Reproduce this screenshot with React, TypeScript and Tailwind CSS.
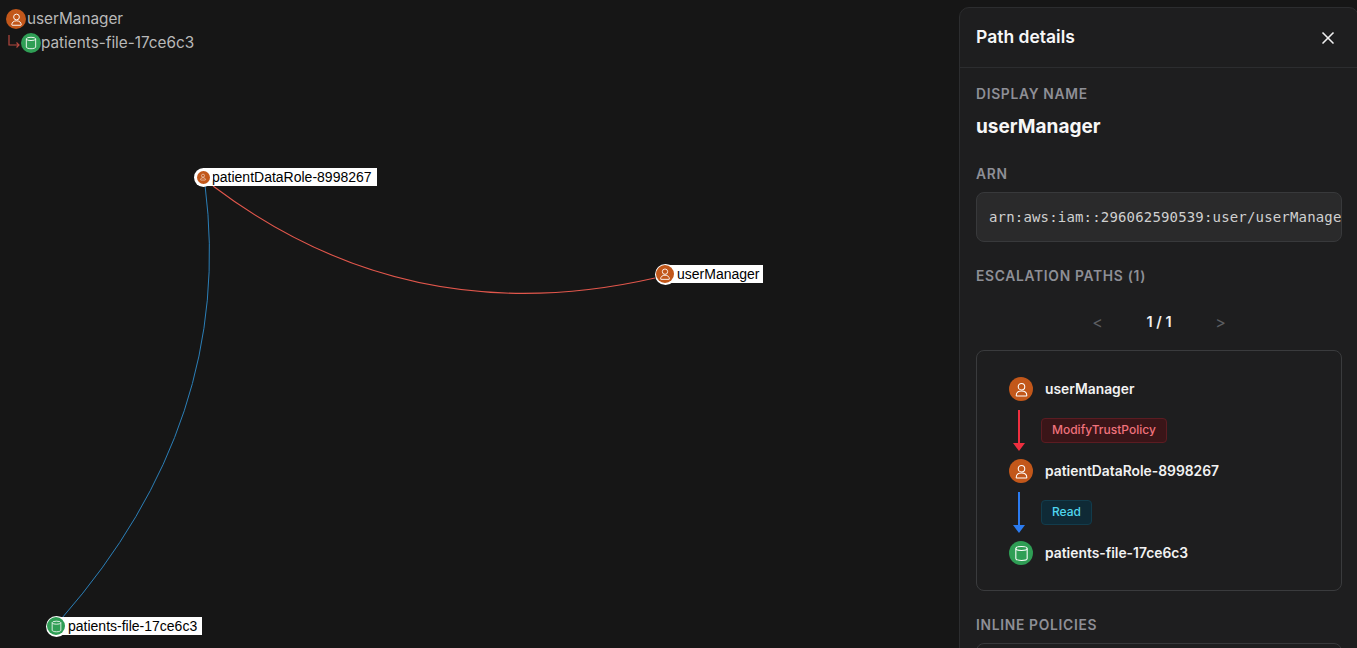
import React from 'react';
import { X } from 'lucide-react';

const inter = 'font-["Inter","Liberation_Sans",sans-serif]';

const UserGlyph: React.FC<{ size: number }> = ({ size }) => (
  <svg width={size} height={size} viewBox="0 0 24 24" fill="none" stroke="white" strokeWidth={1.5} strokeLinejoin="round">
    <circle cx="12" cy="8" r="4.6" />
    <path d="M4.500 20.500c0-4 3-6.400 7.500-6.400s7.500 2.400 7.500 6.400c0 .4-.3.700-.7.700H5.200c-.4 0-.7-.3-.7-.7z" />
  </svg>
);

const BucketGlyph: React.FC<{ size: number }> = ({ size }) => (
  <svg width={size} height={size} viewBox="0 0 24 24" fill="none" stroke="white" strokeWidth={1.5}>
    <ellipse cx="12" cy="5" rx="8" ry="2.800" />
    <path d="M4 5v14c0 1.500 3.600 2.800 8 2.800s8-1.300 8-2.800V5" />
  </svg>
);

const Round: React.FC<{ kind: 'user' | 'bucket'; size?: number; glyph?: number }> = ({ kind, size = 24, glyph = 17 }) => (
  <div
    className={`flex shrink-0 items-center justify-center rounded-full ${kind === 'user' ? 'bg-[#c2571a]' : 'bg-[#2f9e55]'}`}
    style={{ width: size, height: size }}
  >
    {kind === 'user' ? <UserGlyph size={glyph} /> : <BucketGlyph size={glyph} />}
  </div>
);

const SectionLabel: React.FC<{ children: React.ReactNode; className?: string }> = ({ children, className = '' }) => (
  <div className={`text-[13.800px] leading-[16px] font-semibold tracking-[0.7px] text-[#8e8f96] ${className}`}>{children}</div>
);

const PathRow: React.FC<{ kind: 'user' | 'bucket'; name: string }> = ({ kind, name }) => (
  <div className="flex h-6 items-center gap-3">
    <Round kind={kind} />
    <span className="text-[13.850px] font-semibold text-[#f2f2f2]">{name}</span>
  </div>
);

const Connector: React.FC<{ color: string; head: string; badge: string; label: string }> = ({ color, head, badge, label }) => (
  <div className="flex h-[58px] items-center">
    <div className="ml-[9px] flex h-[41px] w-[2px] flex-col items-center">
      <div className={`w-[2px] flex-1 ${color}`} />
      <div className={`h-0 w-0 border-x-[6px] border-t-[8px] border-x-transparent ${head}`} />
    </div>
    <div className={`ml-[21px] flex h-[25px] items-center rounded-[4px] border px-[10px] text-[12px] font-medium ${badge}`}>{label}</div>
  </div>
);

const GraphNode: React.FC<{
  x: number;
  y: number;
  label: string;
  kind: 'user' | 'bucket';
  ring: number;
  dot: number;
  glyph: number;
  labelWidth: number;
  pad: number;
}> = ({ x, y, label, kind, ring, dot, glyph, labelWidth, pad }) => (
  <div className="absolute flex items-center" style={{ left: x - ring / 2, top: y - ring / 2, height: ring }}>
    <div
      className="absolute flex h-[18px] items-center whitespace-nowrap bg-white pt-px font-['Liberation_Sans',sans-serif] text-[14px] text-black"
      style={{ left: ring / 2, width: labelWidth, paddingLeft: pad }}
    >
      {label}
    </div>
    <div className="relative flex items-center justify-center rounded-full bg-white" style={{ width: ring, height: ring }}>
      <Round kind={kind} size={dot} glyph={glyph} />
    </div>
  </div>
);

export default function App() {
  return (
    <div className={`flex h-[648px] w-[1357px] overflow-hidden bg-[#161616] ${inter}`}>
      {/* canvas */}
      <div className="relative w-[959px] shrink-0">
        <svg className="absolute inset-0" width="959" height="648" fill="none">
          <path d="M213 186Q409 334 655 278" stroke="#e2574c" strokeWidth="1.1" />
          <path d="M205 185Q235 420 62 618" stroke="#2b7fb8" strokeWidth="1" />
        </svg>

        <div className="absolute left-0 top-[9px] text-[15.300px] leading-[20px] text-[#b9b9b9]">
          <div className="ml-[6px] flex h-5 items-center">
            <Round kind="user" size={20} glyph={15} />
            <span className="ml-px">userManager</span>
          </div>
          <div className="mt-1 ml-[8px] flex h-5 items-center">
            <svg width="13" height="14" viewBox="0 0 13 14" fill="none" stroke="#b5483f" strokeWidth="1.2" className="mb-[3px]">
              <path d="M1 0V10H11M8.500 7.500L11 10L8.500 12.500" />
            </svg>
            <Round kind="bucket" size={20} glyph={14} />
            <span>patients-file-17ce6c3</span>
          </div>
        </div>

        <GraphNode x={203} y={177} label="patientDataRole-8998267" kind="user" ring={19} dot={13} glyph={8} labelWidth={174} pad={9} />
        <GraphNode x={665} y={274} label="userManager" kind="user" ring={21} dot={18} glyph={14} labelWidth={98} pad={12} />
        <GraphNode x={56} y={626} label="patients-file-17ce6c3" kind="bucket" ring={21} dot={18} glyph={13} labelWidth={146} pad={12} />
      </div>

      {/* details panel */}
      <div className="mt-[7px] h-[660px] w-[400px] shrink-0 rounded-t-[10px] border border-[#2c2d2f] bg-[#1e1e1f] text-white">
        <div className="flex h-[60px] items-center justify-between border-b border-[#2c2d2f] pl-4 pr-[20px]">
          <span className="text-[17.500px] font-semibold text-[#f7f7f7]">Path details</span>
          <X size={20} color="#f0f0f0" strokeWidth={2} />
        </div>
        <div className="px-4 pt-[18px]">
          <SectionLabel>DISPLAY NAME</SectionLabel>
          <div className="mt-[11px] text-[19px] leading-[28px] font-bold text-[#f7f7f7]">userManager</div>

          <SectionLabel className="mt-[25px]">ARN</SectionLabel>
          <div className="mt-[10px] flex h-[50px] items-center overflow-hidden rounded-[8px] border border-[#38393b] bg-[#2a2a2b] pl-3">
            <span className="whitespace-nowrap font-['DejaVu_Sans_Mono',monospace] text-[14px] tracking-[0.17px] text-[#d0d0d0]">
              arn:aws:iam::296062590539:user/userManager
            </span>
          </div>

          <SectionLabel className="mt-[26px]">ESCALATION PATHS (1)</SectionLabel>
          <div className="mt-[28px] flex h-[20px] items-center justify-center text-[14px]">
            <span className="w-[16px] text-center text-[16px] text-[#5c5e62]">&lt;</span>
            <span className="mx-[41px] text-[14.500px] font-semibold text-[#f2f2f2]">1 / 1</span>
            <span className="w-[16px] text-center text-[16px] text-[#5c5e62]">&gt;</span>
          </div>

          <div className="mt-[18px] h-[241px] rounded-[8px] border border-[#3a3b3d] pl-[32px] pt-[26px]">
            <PathRow kind="user" name="userManager" />
            <Connector
              color="bg-[#ef2f3f]"
              head="border-t-[#ef2f3f]"
              badge="border-[#5c1c22] bg-[#3a1518] text-[#f0727c]"
              label="ModifyTrustPolicy"
            />
            <PathRow kind="user" name="patientDataRole-8998267" />
            <Connector
              color="bg-[#2b7bf0]"
              head="border-t-[#2b7bf0]"
              badge="border-[#123c4c] bg-[#0f2a36] text-[#4fd6ee]"
              label="Read"
            />
            <PathRow kind="bucket" name="patients-file-17ce6c3" />
          </div>

          <SectionLabel className="mt-[26px]">INLINE POLICIES</SectionLabel>
          <div className="mt-[10px] h-[50px] rounded-[8px] border border-[#38393b]" />
        </div>
      </div>
    </div>
  );
}
